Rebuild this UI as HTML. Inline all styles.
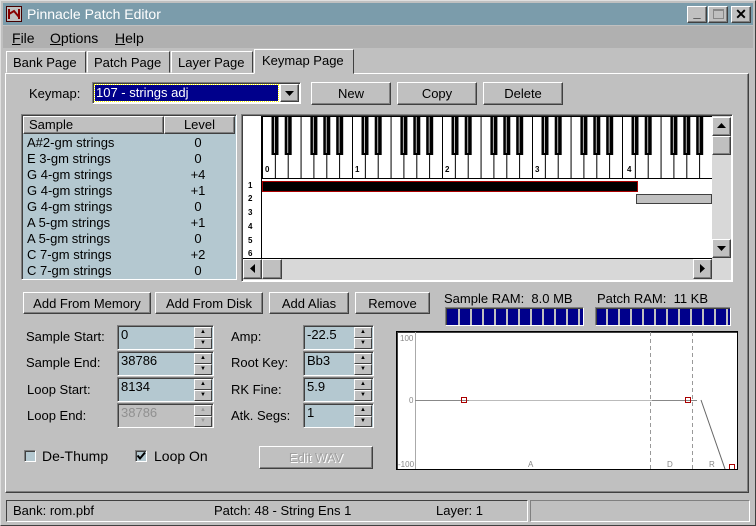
<!DOCTYPE html>
<html><head><meta charset="utf-8"><style>
*{box-sizing:border-box;margin:0;padding:0}
body{width:756px;height:526px;overflow:hidden;background:#c0c0c0;font-family:"Liberation Sans",sans-serif;font-size:13px;color:#000;position:relative}
.a{position:absolute}
.btn{position:absolute;background:#c0c0c0;border:1px solid;border-color:#fff #404040 #404040 #fff;box-shadow:inset -1px -1px 0 #808080;text-align:center;font-size:13px}
.sunk{position:absolute;border:1px solid;border-color:#808080 #fff #fff #808080;box-shadow:inset 1px 1px 0 #404040}
.fld{position:absolute;background:#b4c8d0;border:1px solid;border-color:#808080 #fff #fff #808080;box-shadow:inset 1px 1px 0 #404040;padding:1px 0 0 3px;font-size:13px}
.spin{position:absolute;width:18px;background:#c0c0c0}
.spin div{height:11px;border:1px solid;border-color:#fff #404040 #404040 #fff;font-size:6px;text-align:center;line-height:8px}
.lbl{position:absolute;font-size:13px}
u{text-decoration:underline}
</style></head><body>
<!-- outer frame -->
<div class="a" style="left:0;top:0;width:756px;height:526px;border:1px solid;border-color:#dfdfdf #404040 #404040 #dfdfdf"></div>
<!-- title -->
<div class="a" style="left:3px;top:3px;width:750px;height:22px;background:#7b9cab"></div>
<div class="a" style="left:6px;top:6px;width:16px;height:16px;background:#c0c0c0;border:1px solid #400"><svg width="14" height="14"><path d="M2 2v10M12 2v10M2 7l5-3 5 6" stroke="#800" stroke-width="2" fill="none"/></svg></div>
<div class="a" style="left:27px;top:6px;color:#fff;font-size:14px">Pinnacle Patch Editor</div>
<div class="btn" style="left:687px;top:6px;width:20px;height:17px;font-weight:bold;line-height:12px">_</div>
<div class="btn" style="left:708px;top:6px;width:20px;height:17px"><div class="a" style="left:4px;top:2px;width:11px;height:10px;border:1px solid #888;border-top-width:2px"></div></div>
<div class="btn" style="left:731px;top:6px;width:20px;height:17px;font-weight:bold;font-size:14px;line-height:14px">✕</div>
<!-- menu -->
<div class="a" style="left:3px;top:26px;width:750px;height:22px;background:#b0b0b0"></div>
<div class="lbl" style="left:12px;top:30px;font-size:14px"><u>F</u>ile</div>
<div class="lbl" style="left:50px;top:30px;font-size:14px"><u>O</u>ptions</div>
<div class="lbl" style="left:115px;top:30px;font-size:14px"><u>H</u>elp</div>
<!-- tabs -->
<div class="a" style="left:6px;top:51px;width:80px;height:22px;border:1px solid;border-color:#fff #404040 transparent #fff;padding:3px 0 0 6px">Bank Page</div>
<div class="a" style="left:87px;top:51px;width:83px;height:22px;border:1px solid;border-color:#fff #404040 transparent #fff;padding:3px 0 0 6px">Patch Page</div>
<div class="a" style="left:171px;top:51px;width:82px;height:22px;border:1px solid;border-color:#fff #404040 transparent #fff;padding:3px 0 0 6px">Layer Page</div>
<div class="a" style="left:254px;top:49px;width:100px;height:25px;border:1px solid;border-color:#fff #404040 transparent #fff;padding:3px 0 0 7px;background:#c0c0c0;z-index:2">Keymap Page</div>
<!-- page frame -->
<div class="a" style="left:5px;top:73px;width:744px;height:420px;border:1px solid;border-color:#fff #404040 #404040 #fff;box-shadow:inset -1px -1px 0 #808080"></div>
<div class="lbl" style="left:29px;top:86px">Keymap:</div>
<div class="sunk" style="left:92px;top:82px;width:209px;height:22px;background:#fff"></div>
<div class="a" style="left:95px;top:85px;width:183px;height:16px;background:#00008b;color:#fff;padding-left:1px;outline:1px dotted #ff0">107 - strings adj</div>
<div class="btn" style="left:280px;top:84px;width:19px;height:18px"><svg width="17" height="16"><path d="M4 6h9l-4.5 5z"/></svg></div>
<div class="btn" style="left:311px;top:82px;width:80px;height:23px;padding-top:3px">New</div>
<div class="btn" style="left:397px;top:82px;width:80px;height:23px;padding-top:3px">Copy</div>
<div class="btn" style="left:483px;top:82px;width:80px;height:23px;padding-top:3px">Delete</div>
<!-- list -->
<div class="sunk" style="left:21px;top:114px;width:216px;height:166px;background:#b4c8d0"></div>
<div class="btn" style="left:23px;top:116px;width:141px;height:18px;text-align:left;padding-left:5px">Sample</div>
<div class="btn" style="left:164px;top:116px;width:71px;height:18px">Level</div>
<div class="a" style="left:27px;top:135px;line-height:16px;font-size:13px">A#2-gm strings<br>E 3-gm strings<br>G 4-gm strings<br>G 4-gm strings<br>G 4-gm strings<br>A 5-gm strings<br>A 5-gm strings<br>C 7-gm strings<br>C 7-gm strings</div>
<div class="a" style="left:178px;top:135px;line-height:16px;width:40px;text-align:center">0<br>0<br>+4<br>+1<br>0<br>+1<br>0<br>+2<br>0</div>
<!-- keyboard -->
<div class="sunk" style="left:241px;top:114px;width:492px;height:168px;background:#fff"></div>
<svg class="a" style="left:243px;top:116px" width="488" height="164">
<defs><pattern id="oct" x="19" y="0" width="90" height="62" patternUnits="userSpaceOnUse">
<rect width="90" height="62" fill="#fff"/>
<g stroke="#000" stroke-width="1"><path d="M0.5 0V62M13.36 0V62M26.2 0V62M39.07 0V62M51.9 0V62M64.8 0V62M77.6 0V62"/></g>
<g fill="#000"><rect x="9.5" y="0" width="7" height="39"/><rect x="22.7" y="0" width="7" height="39"/><rect x="48.4" y="0" width="7" height="39"/><rect x="61.3" y="0" width="7" height="39"/><rect x="74.2" y="0" width="7" height="39"/></g>
<g stroke="#bbb"><path d="M12.5 0V37M25.7 0V37M51.4 0V37M64.3 0V37M77.2 0V37"/></g>
</pattern></defs>
<rect x="19" y="0" width="450" height="62" fill="url(#oct)"/>
<path d="M19 0.5H469M19 62.5H469M18.5 0V142" stroke="#000"/>
<g font-size="8" font-family="Liberation Sans" font-weight="bold"><text x="22" y="56">0</text><text x="112" y="56">1</text><text x="202" y="56">2</text><text x="292" y="56">3</text><text x="384" y="56">4</text>
<text x="5" y="72">1</text><text x="5" y="85">2</text><text x="5" y="99">3</text><text x="5" y="113">4</text><text x="5" y="127">5</text><text x="5" y="140">6</text></g>
<rect x="19.5" y="65.5" width="375" height="10" fill="#000" stroke="#a00"/>
<rect x="393.5" y="78.5" width="75" height="9" fill="#c0c0c0" stroke="#404040"/>
<rect x="469" y="0" width="19" height="164" fill="#d8d8d8"/>
<rect x="0" y="143" width="488" height="21" fill="#d8d8d8"/>
<path d="M0 142.5H469" stroke="#000"/>
</svg>
<div class="btn" style="left:712px;top:117px;width:19px;height:19px"><svg width="17" height="16"><path d="M4 10h9l-4.5-5z"/></svg></div>
<div class="btn" style="left:712px;top:136px;width:19px;height:19px"></div>
<div class="btn" style="left:712px;top:239px;width:19px;height:19px"><svg width="17" height="16"><path d="M4 6h9l-4.5 5z"/></svg></div>
<div class="btn" style="left:243px;top:259px;width:19px;height:20px"><svg width="17" height="17"><path d="M11 4v9l-5-4.5z"/></svg></div>
<div class="btn" style="left:262px;top:259px;width:20px;height:20px"></div>
<div class="btn" style="left:693px;top:259px;width:19px;height:20px"><svg width="17" height="17"><path d="M6 4v9l5-4.5z"/></svg></div>
<!-- buttons row -->
<div class="btn" style="left:23px;top:292px;width:128px;height:22px;padding-top:3px">Add From Memory</div>
<div class="btn" style="left:155px;top:292px;width:108px;height:22px;padding-top:3px">Add From Disk</div>
<div class="btn" style="left:269px;top:292px;width:80px;height:22px;padding-top:3px">Add Alias</div>
<div class="btn" style="left:355px;top:292px;width:75px;height:22px;padding-top:3px">Remove</div>
<div class="lbl" style="left:444px;top:291px">Sample RAM:&nbsp; 8.0 MB</div>
<div class="lbl" style="left:597px;top:291px">Patch RAM:&nbsp; 11 KB</div>
<div class="sunk" style="left:445px;top:307px;width:139px;height:19px;background:repeating-linear-gradient(90deg,#00008b 0 10px,#c0c0c0 10px 12px);background-origin:content-box;padding:2px"></div>
<div class="sunk" style="left:595px;top:307px;width:136px;height:19px;background:repeating-linear-gradient(90deg,#00008b 0 10px,#c0c0c0 10px 12px)"></div>
<!-- fields -->
<div class="lbl" style="left:26px;top:329px">Sample Start:</div>
<div class="lbl" style="left:26px;top:355px">Sample End:</div>
<div class="lbl" style="left:27px;top:382px">Loop Start:</div>
<div class="lbl" style="left:27px;top:408px">Loop End:</div>
<div class="fld" style="left:117px;top:325px;width:97px;height:25px">0</div>
<div class="fld" style="left:117px;top:351px;width:97px;height:25px">38786</div>
<div class="fld" style="left:117px;top:377px;width:97px;height:25px">8134</div>
<div class="fld" style="left:117px;top:403px;width:97px;height:25px;background:#c0c0c0;color:#909090">38786</div>
<div class="lbl" style="left:231px;top:329px">Amp:</div>
<div class="lbl" style="left:231px;top:355px">Root Key:</div>
<div class="lbl" style="left:231px;top:382px">RK Fine:</div>
<div class="lbl" style="left:231px;top:408px">Atk. Segs:</div>
<div class="fld" style="left:303px;top:325px;width:71px;height:25px">-22.5</div>
<div class="fld" style="left:303px;top:351px;width:71px;height:25px">Bb3</div>
<div class="fld" style="left:303px;top:377px;width:71px;height:25px">5.9</div>
<div class="fld" style="left:303px;top:403px;width:71px;height:25px">1</div>
<div class="spin" style="left:194px;top:327px"><div>▲</div><div>▼</div></div>
<div class="spin" style="left:194px;top:353px"><div>▲</div><div>▼</div></div>
<div class="spin" style="left:194px;top:379px"><div>▲</div><div>▼</div></div>
<div class="spin" style="left:194px;top:405px;color:#999"><div>▲</div><div>▼</div></div>
<div class="spin" style="left:354px;top:327px"><div>▲</div><div>▼</div></div>
<div class="spin" style="left:354px;top:353px"><div>▲</div><div>▼</div></div>
<div class="spin" style="left:354px;top:379px"><div>▲</div><div>▼</div></div>
<div class="spin" style="left:354px;top:405px"><div>▲</div><div>▼</div></div>
<div class="sunk" style="left:24px;top:450px;width:12px;height:12px;background:#b4c8d0"></div>
<div class="lbl" style="left:42px;top:448px;font-size:14px">De-Thump</div>
<div class="sunk" style="left:135px;top:450px;width:12px;height:12px;background:#b4c8d0"><svg class="a" style="left:0;top:0" width="10" height="10"><path d="M1.5 4.5l2.5 3 5-6" stroke="#000" stroke-width="2" fill="none"/></svg></div>
<div class="lbl" style="left:154px;top:448px;font-size:14px">Loop On</div>
<div class="btn" style="left:259px;top:446px;width:114px;height:23px;color:#f0f0f0;text-shadow:1px 1px 0 #fff;padding-top:3px"><span style="color:#a0a0a0">Edit WAV</span></div>
<!-- graph -->
<div class="sunk" style="left:396px;top:331px;width:342px;height:139px;background:#fff;border-color:#000"></div>
<svg class="a" style="left:397px;top:332px" width="340" height="137" font-family="Liberation Sans" font-size="8" fill="#888">
<path d="M18.5 0V137" stroke="#aaa"/>
<path d="M18 68.5H255M255 68.5H300" stroke="#888"/>
<path d="M72 68.5H255" stroke="#bbb"/>
<path d="M253.5 0V137M295.5 0V137" stroke="#999" stroke-dasharray="4 3"/>
<path d="M304 68L328 137" stroke="#666"/>
<rect x="64.5" y="65.5" width="5" height="5" fill="none" stroke="#a00"/>
<rect x="288.5" y="65.5" width="5" height="5" fill="none" stroke="#a00"/>
<rect x="332.5" y="132.5" width="5" height="5" fill="none" stroke="#a00"/>
<text x="3" y="9">100</text><text x="12" y="71">0</text><text x="1" y="135">-100</text>
<text x="131" y="135">A</text><text x="270" y="135">D</text><text x="312" y="135">R</text>
</svg>
<!-- status -->
<div class="sunk" style="left:6px;top:500px;width:522px;height:22px;box-shadow:none;border-color:#404040 #fff #fff #404040"></div>
<div class="sunk" style="left:530px;top:500px;width:220px;height:22px;box-shadow:none"></div>
<div class="lbl" style="left:13px;top:503px">Bank: rom.pbf</div>
<div class="lbl" style="left:214px;top:503px">Patch: 48 - String Ens 1</div>
<div class="lbl" style="left:436px;top:503px">Layer: 1</div>
</body></html>
